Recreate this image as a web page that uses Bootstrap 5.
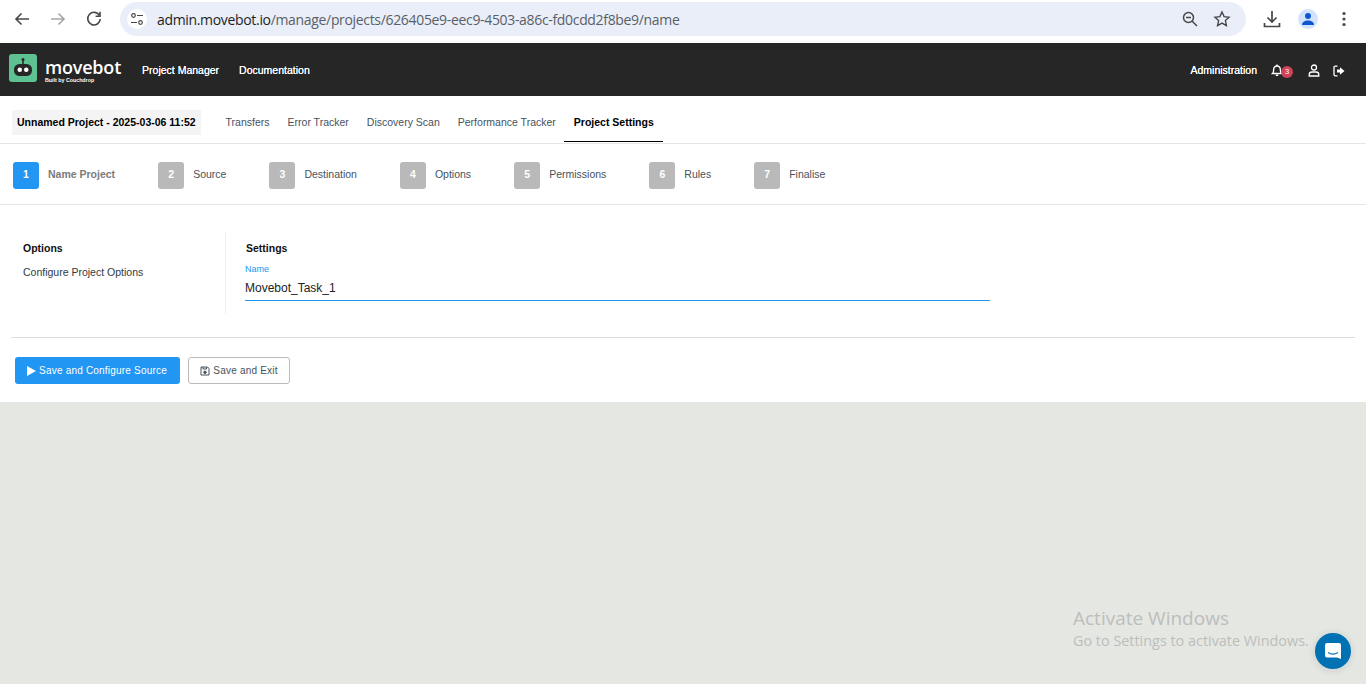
<!DOCTYPE html>
<html lang="en">
<head>
    <title>Movebot</title>
    <meta charset="UTF-8">
    <meta name="viewport" content="width=device-width, initial-scale=1">
    <link href="https://cdn.jsdelivr.net/npm/bootstrap@5.3.0/dist/css/bootstrap.min.css" rel="stylesheet">
    <style>
        html, body { height: 100%; }
        body {
            background: #e5e7e3;
            font-family: "Liberation Sans", Arial, sans-serif;
            font-size: 10.5px;
            overflow: hidden;
        }

        /* browser chrome */
        .chrome-bar { height: 43px; background: #fff; padding: 2px 0 7px 0; }
        .chrome-btn { width: 20px; height: 20px; color: #474747; }
        .chrome-nav { width: 120px; padding-left: 12px; gap: 16px; }
        .address-bar { width: 1126px; height: 34px; background: #e9eef9; border-radius: 17px; padding: 0 15px 0 7px; }
        .site-chip { width: 20px; height: 20px; margin-right: 10px; background: #fff; border-radius: 50%; }
        .address-text { font-family: "Open Sans", "Noto Sans", sans-serif; font-size: 14px; letter-spacing: -.33px; color: #5b5f66; padding-top: 1px; }
        .address-text b { font-weight: 400; color: #1f1f1f; }
        .zoom-icon { margin-right: 14px; }
        .chrome-right { width: 120px; padding-left: 16px; }
        .download-icon { margin-right: 16px; }
        .avatar-dot { width: 20px; height: 20px; margin-right: 18px; border-radius: 50%; background: #d3e3fd; }

        /* app header */
        .app-header { height: 53px; background: #262626; padding: 2px 21px 0 9px; color: #fff; }
        .logo-link { margin-bottom: 5px; }
        .logo-box { width: 28px; height: 28px; background: #5dc192; border-radius: 3px; }
        .logo-word { margin: 4px 0 0 8px; line-height: 1; }
        .logo-name { font-family: "Open Sans", sans-serif; font-size: 18px; font-weight: 600; line-height: 18px; letter-spacing: -.2px; }
        .logo-sub { font-size: 5.3px; font-weight: 700; line-height: 6px; margin-top: 1px; }
        .head-link { color: #fff; text-decoration: none; font-size: 10.5px; text-shadow: 0 0 .4px #fff; margin-left: 20px; }
        .head-link.first-link { margin-left: 21px; }
        .head-link.admin-link { margin-left: 0; }
        .bell-wrap { width: 22px; height: 14px; margin-left: 14px; }
        .user-icon { margin-left: 15px; }
        .exit-icon { margin-left: 13px; }
        .badge-count {
            position: absolute; left: 10px; top: 2px; width: 12px; height: 12px; border-radius: 50%;
            background: #d0435a; color: #fff; font-size: 7.5px; line-height: 12px; text-align: center;
        }

        /* tabs */
        .tab-row { height: 48px; background: #fff; border-bottom: 1px solid #e6e6e6; padding: 0 0 0 12px; }
        .project-chip { height: 25px; line-height: 25px; background: #f4f4f4; padding: 0 5px; font-weight: 700; font-size: 10.5px; color: #000; margin-right: 16px; margin-top: 5px; }
        .tab-link { height: 47px; line-height: 52px; padding: 0 9px; color: #45525e; text-decoration: none; font-size: 10.5px; margin-top: -1px; }
        .tab-link.is-active { color: #000; font-weight: 700; border-bottom: 1px solid #000; padding: 0 9px 0 10px; height: 46px; margin-left: -1px; }

        /* steps */
        .step-row { height: 61px; background: #fff; border-bottom: 1px solid #e6e6e6; padding: 2px 13px 0; }
        .step-item { margin-right: 43px; }
        .step-num { width: 26px; height: 27px; border-radius: 3px; background: #b9b9b9; color: #fff; font-weight: 700; font-size: 10.5px; }
        .step-num.is-on { background: #2196f3; }
        .step-label { margin: 0 0 0 9px; color: #45525e; font-size: 10.5px; }
        .step-label.is-on { color: #7b7b7b; font-weight: 700; }

        /* form area */
        .main-panel { background: #fff; height: 197px; padding: 27px 11px 0 11px; }
        .side-col { width: 215px; height: 82px; padding: 9px 0 0 12px; border-right: 1px solid #efefef; color: #2f3a45; }
        .side-title { font-weight: 700; color: #111; margin-bottom: 8px; }
        .form-col { padding: 9px 0 0 20px; }
        .field-box { width: 745px; margin-left: -1px; margin-top: 7px; border-bottom: 1px solid #2196f3; height: 37px; }
        .field-label { color: #2196f3; font-size: 9px; line-height: 10px; }
        .field-value { font-size: 12px; line-height: 14px; margin-top: 7px; color: #222; }
        .split-line { border-top: 1px solid #ddd; margin: 23px 0 0 0; }
        .action-row { padding: 19px 0 0 4px; gap: 8px; }
        .btn-save { background: #2196f3; color: #fff; font-size: 10px; letter-spacing: .02em; height: 27px; width: 165px; padding: 0 1px 0 0; border: 0; border-radius: 3px; gap: 3px; }
        .btn-exit { background: #fff; color: #45525e; font-size: 10px; letter-spacing: .02em; height: 27px; width: 102px; padding: 0; border: 1px solid #bbb; border-radius: 3px; gap: 3px; }

        /* overlays */
        .win-mark { position: absolute; left: 1073px; top: 606px; color: #bcbebb; font-family: "Open Sans", "Noto Sans", sans-serif; }
        .win-mark div:first-child { font-size: 19px; line-height: 24px; }
        .win-mark div:last-child { font-size: 14.4px; line-height: 22px; }
        .chat-fab { position: absolute; left: 1315px; top: 633px; width: 36px; height: 36px; border-radius: 50%; background: #0071b2; box-shadow: 0 1px 8px rgba(0,0,0,.12); }
    </style>
</head>
<body>

<!-- browser bar -->
<div class="chrome-bar d-flex align-items-center">
    <div class="chrome-nav d-flex align-items-center">
        <svg class="chrome-btn" viewBox="0 0 20 20" fill="none" stroke="#474747" stroke-width="1.6"><path d="M17 10H4M9.5 4.5 4 10l5.500 5.500"/></svg>
        <svg class="chrome-btn" viewBox="0 0 20 20" fill="none" stroke="#a6a6a6" stroke-width="1.6"><path d="M3 10h13M10.500 4.500 16 10l-5.500 5.500"/></svg>
        <svg class="chrome-btn" viewBox="0 0 20 20" fill="none" stroke="#474747" stroke-width="1.6"><path d="M15.500 6.500A6.300 6.300 0 1 0 16.300 10"/><path d="M16 2.800v4.400h-4.400"/></svg>
    </div>
    <div class="address-bar d-flex align-items-center">
        <div class="site-chip d-flex align-items-center justify-content-center">
            <svg width="14" height="14" viewBox="0 0 14 14" fill="none" stroke="#474747" stroke-width="1.2"><circle cx="3.500" cy="3.500" r="1.800"/><path d="M7 3.500h6M1 10.500h6"/><circle cx="10.500" cy="10.500" r="1.800"/></svg>
        </div>
        <span class="address-text flex-grow-1"><b>admin.movebot.io</b>/manage/projects/626405e9-eec9-4503-a86c-fd0cdd2f8be9/name</span>
        <svg class="zoom-icon" width="18" height="18" viewBox="0 0 18 18" fill="none" stroke="#474747" stroke-width="1.5"><circle cx="7.500" cy="7.500" r="5"/><path d="M5 7.500h5M11.200 11.200 16 16"/></svg>
        <svg width="18" height="18" viewBox="0 0 18 18" fill="none" stroke="#474747" stroke-width="1.4"><path d="m9 2 2.100 4.600 5 .6-3.700 3.400 1 5L9 13.100l-4.400 2.500 1-5L1.900 7.200l5-.6z"/></svg>
    </div>
    <div class="chrome-right d-flex align-items-center">
        <svg class="download-icon" width="20" height="20" viewBox="0 0 20 20" fill="none" stroke="#474747" stroke-width="1.7"><path d="M10 2v11M5.500 8.500 10 13l4.500-4.500M2.500 14v3.500h15V14"/></svg>
        <div class="avatar-dot d-flex align-items-center justify-content-center">
            <svg width="14" height="14" viewBox="0 0 14 14" fill="#0b57d0"><circle cx="7" cy="4" r="3"/><path d="M1 13c0-3 2.500-4.500 6-4.500s6 1.500 6 4.500z"/></svg>
        </div>
        <svg width="16" height="18" viewBox="0 0 16 18" fill="#474747"><circle cx="8" cy="3.500" r="1.600"/><circle cx="8" cy="9" r="1.600"/><circle cx="8" cy="14.500" r="1.600"/></svg>
    </div>
</div>

<!-- app header -->
<header class="app-header d-flex align-items-center justify-content-between">
    <div class="d-flex align-items-center">
        <a class="logo-link d-flex align-items-center text-white text-decoration-none" href="#">
            <span class="logo-box d-flex align-items-center justify-content-center">
                <svg width="22" height="22" viewBox="0 0 22 22"><path d="M11 2v5" stroke="#262626" stroke-width="1.500"/><circle cx="11" cy="2.500" r="1.500" fill="#262626"/><rect x="2" y="7" width="18" height="12" rx="5.500" fill="#262626"/><rect x="5.500" y="10.500" width="4.500" height="4.500" rx="2.200" fill="#fff"/><rect x="12" y="10.500" width="4.500" height="4.500" rx="2.200" fill="#fff"/></svg>
            </span>
            <span class="logo-word d-flex flex-column">
                <span class="logo-name">movebot</span>
                <span class="logo-sub">Built by Couchdrop</span>
            </span>
        </a>
        <a class="head-link first-link" href="#">Project Manager</a>
        <a class="head-link" href="#">Documentation</a>
    </div>
    <div class="d-flex align-items-center">
        <a class="head-link admin-link" href="#">Administration</a>
        <span class="bell-wrap position-relative d-inline-block">
            <svg class="d-block" width="12" height="13" viewBox="0 0 12 13" fill="none" stroke="#fff" stroke-width="1.400"><path d="M1.500 9.500c1-1 1.200-2 1.200-4A3.300 3.300 0 0 1 6 2a3.300 3.300 0 0 1 3.300 3.500c0 2 .2 3 1.200 4z"/><path d="M4.800 11.300h2.400M6 .5V2"/></svg>
            <span class="badge-count">3</span>
        </span>
        <svg class="user-icon" width="12" height="13" viewBox="0 0 12 13" fill="none" stroke="#fff" stroke-width="1.300"><circle cx="6" cy="3.500" r="2.500"/><path d="M1.200 12v-1.200C1.200 9 2.700 8 4 8h4c1.300 0 2.800 1 2.800 2.800V12z"/></svg>
        <svg class="exit-icon" width="12" height="12" viewBox="0 0 12 12"><path d="M4.500 1.200H2.300C1.500 1.200 1 1.700 1 2.500v7c0 .8.500 1.300 1.300 1.300h2.200" fill="none" stroke="#fff" stroke-width="1.300"/><path d="M7 2.200 11.500 6 7 9.800V7.600H4V4.400h3z" fill="#fff"/></svg>
    </div>
</header>

<!-- project tabs -->
<nav class="tab-row d-flex align-items-center">
    <div class="project-chip">Unnamed Project - 2025-03-06 11:52</div>
    <a class="tab-link" href="#">Transfers</a>
    <a class="tab-link" href="#">Error Tracker</a>
    <a class="tab-link" href="#">Discovery Scan</a>
    <a class="tab-link" href="#">Performance Tracker</a>
    <a class="tab-link is-active" href="#">Project Settings</a>
</nav>

<!-- wizard steps -->
<div class="step-row d-flex align-items-center">
    <div class="step-item d-flex align-items-center"><span class="step-num is-on d-flex align-items-center justify-content-center">1</span><span class="step-label is-on">Name Project</span></div>
    <div class="step-item d-flex align-items-center"><span class="step-num d-flex align-items-center justify-content-center">2</span><span class="step-label">Source</span></div>
    <div class="step-item d-flex align-items-center"><span class="step-num d-flex align-items-center justify-content-center">3</span><span class="step-label">Destination</span></div>
    <div class="step-item d-flex align-items-center"><span class="step-num d-flex align-items-center justify-content-center">4</span><span class="step-label">Options</span></div>
    <div class="step-item d-flex align-items-center"><span class="step-num d-flex align-items-center justify-content-center">5</span><span class="step-label">Permissions</span></div>
    <div class="step-item d-flex align-items-center"><span class="step-num d-flex align-items-center justify-content-center">6</span><span class="step-label">Rules</span></div>
    <div class="step-item d-flex align-items-center"><span class="step-num d-flex align-items-center justify-content-center">7</span><span class="step-label">Finalise</span></div>
</div>

<!-- form -->
<main class="main-panel">
    <div class="d-flex">
        <div class="side-col">
            <div class="side-title">Options</div>
            <div>Configure Project Options</div>
        </div>
        <div class="form-col">
            <div class="side-title mb-0">Settings</div>
            <div class="field-box">
                <div class="field-label">Name</div>
                <div class="field-value">Movebot_Task_1</div>
            </div>
        </div>
    </div>
    <div class="split-line"></div>
    <div class="action-row d-flex">
        <button type="button" class="btn btn-save d-flex align-items-center justify-content-center">
            <svg width="9" height="10" viewBox="0 0 9 10" fill="#fff"><path d="M0 0v10l9-5z"/></svg>Save and Configure Source
        </button>
        <button type="button" class="btn btn-exit d-flex align-items-center justify-content-center">
            <svg width="10" height="10" viewBox="0 0 10 10" fill="none" stroke="#45525e"><path d="M1 1h6.500L9 2.500V9H1z"/><path d="M3 1v2h3.500V1"/><circle cx="5" cy="6.300" r="1.200" fill="#45525e"/></svg>Save and Exit
        </button>
    </div>
</main>

<!-- windows watermark + chat launcher -->
<div class="win-mark">
    <div>Activate Windows</div>
    <div>Go to Settings to activate Windows.</div>
</div>
<div class="chat-fab d-flex align-items-center justify-content-center">
    <svg width="18" height="18" viewBox="0 0 18 18"><path d="M1 3a2 2 0 0 1 2-2h12a2 2 0 0 1 2 2v14l-4-1.500H3a2 2 0 0 1-2-2z" fill="#fff"/><path d="M4 10.500c3 2 7 2 10 0" fill="none" stroke="#0071b2" stroke-width="1.100"/></svg>
</div>

<script src="https://cdn.jsdelivr.net/npm/bootstrap@5.3.0/dist/js/bootstrap.bundle.min.js"></script>
</body>
</html>
